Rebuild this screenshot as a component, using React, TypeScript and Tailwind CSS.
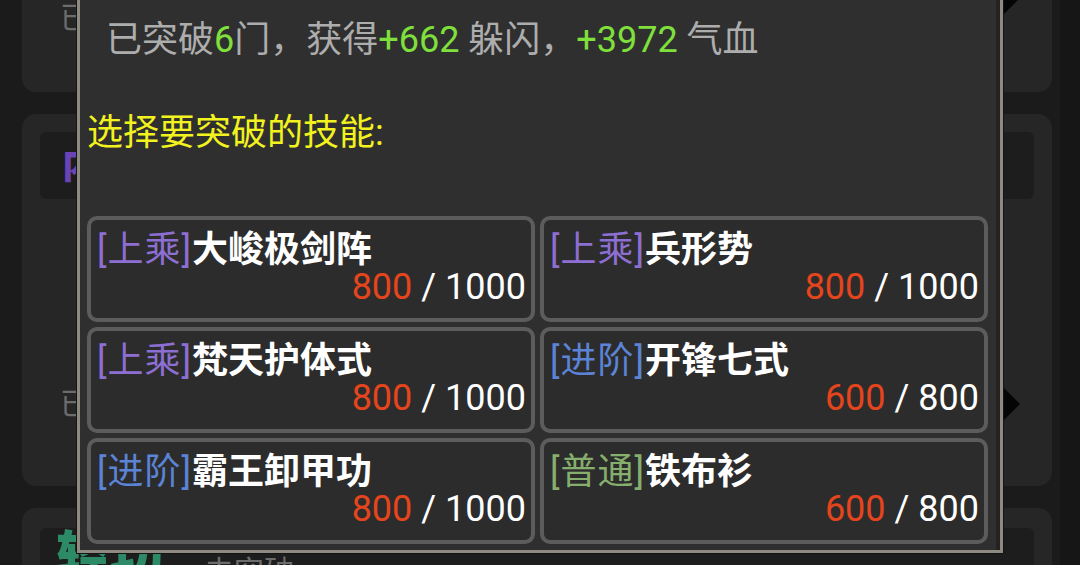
import React from "react";

type Skill = {
  tier: "上乘" | "进阶" | "普通";
  name: string;
  cur: number;
  max: number;
};

const skills: Skill[] = [
  { tier: "上乘", name: "大峻极剑阵", cur: 800, max: 1000 },
  { tier: "上乘", name: "兵形势", cur: 800, max: 1000 },
  { tier: "上乘", name: "梵天护体式", cur: 800, max: 1000 },
  { tier: "进阶", name: "开锋七式", cur: 600, max: 800 },
  { tier: "进阶", name: "霸王卸甲功", cur: 800, max: 1000 },
  { tier: "普通", name: "铁布衫", cur: 600, max: 800 },
];

const tierColor: Record<Skill["tier"], string> = {
  上乘: "text-[#8d6fd3]",
  进阶: "text-[#5b83d6]",
  普通: "text-[#86ae6c]",
};

const font = { fontFamily: 'Roboto, "Noto Sans CJK SC", sans-serif' };

function Arrow() {
  return (
    <svg width="32" height="44" viewBox="0 0 32 44" className="blur-[0.6px]">
      <polygon points="6,0 28,22 6,44 0,22" fill="#050505" />
    </svg>
  );
}

function SkillCard({ skill }: { skill: Skill }) {
  return (
    <div className="h-[106px] rounded-[10px] border-4 border-[#5c5c5c] bg-[#2c2c2c] pl-[6px] pr-[5px] pt-[12px]">
      <div className="text-[36px] leading-[37px] whitespace-nowrap">
        <span className={`tracking-[1px] ${tierColor[skill.tier]}`}>[{skill.tier}]</span>
        <span className="font-bold text-white">{skill.name}</span>
      </div>
      <div className="text-right text-[36px] leading-[37px] text-white">
        <span className="text-[#e5451c]">{skill.cur}</span> / {skill.max}
      </div>
    </div>
  );
}

function BreakthroughDialog() {
  return (
    <div className="absolute left-[77px] top-[-10px] h-[563px] w-[926px] border-[3px] border-[#8e8a82] bg-[#2f2f2f] shadow-[0_0_0_1px_#151515]">
      <div className="h-full border-r-4 border-[#232323] pl-[7px] pr-[8px]">
        <p className="pl-[19px] pt-[27px] text-[36px] leading-[40px] text-[#adadad] whitespace-nowrap">
          已突破<span className="text-[#7fe03b]">6</span>门，获得
          <span className="text-[#7fe03b]">+662</span> 躲闪，
          <span className="text-[#7fe03b]">+3972</span> 气血
        </p>
        <p className="mt-[53px] text-[36px] leading-[40px] text-[#f2f21e]">选择要突破的技能:</p>
        <div className="mt-[63px] grid grid-cols-2 gap-[5px]">
          {skills.map((s) => (
            <SkillCard key={s.name} skill={s} />
          ))}
        </div>
      </div>
    </div>
  );
}

export default function App() {
  return (
    <div className="relative flex h-[565px] w-[1080px] overflow-hidden bg-[#1b1b1b]" style={font}>
      {/* list of martial arts behind the dialog */}
      <div className="flex flex-1 flex-col gap-[22px] pl-[22px] pr-[8px]">
        <div className="-mt-[20px] flex h-[112px] shrink-0 items-start justify-between rounded-[14px] bg-[#262626] pl-[38px] pr-[28px] pt-[22px]">
          <span className="text-[30px] leading-[32px] text-[#6c6c6c]">已突破0门</span>
          <div className="-mt-[26px]">
            <Arrow />
          </div>
        </div>
        <div className="flex h-[372px] shrink-0 flex-col rounded-[14px] bg-[#262626] px-[18px] pt-[18px]">
          <div className="flex h-[67px] items-center rounded-[6px] bg-[#1d1d1d] pl-[22px]">
            <span className="text-[38px] font-black text-[#6a43b5]">内功</span>
          </div>
          <div className="mt-auto mb-[60px] flex items-center justify-between pl-[20px] pr-[10px]">
            <span className="text-[30px] leading-[32px] text-[#6c6c6c]">已突破0门</span>
            <Arrow />
          </div>
        </div>
        <div className="flex h-[200px] shrink-0 flex-col rounded-[14px] bg-[#262626] px-[18px] pt-[20px]">
          <div className="flex h-[90px] items-start gap-[40px] rounded-[6px] bg-[#1d1d1d] pl-[16px]">
            <span className="text-[54px] font-black leading-[60px] text-[#2c8a66]">轻功</span>
            <span className="mt-[28px] text-[30px] leading-[32px] text-[#6c6c6c]">未突破</span>
          </div>
        </div>
      </div>
      <div className="w-[20px] bg-[#161616]" />
      <BreakthroughDialog />
    </div>
  );
}
